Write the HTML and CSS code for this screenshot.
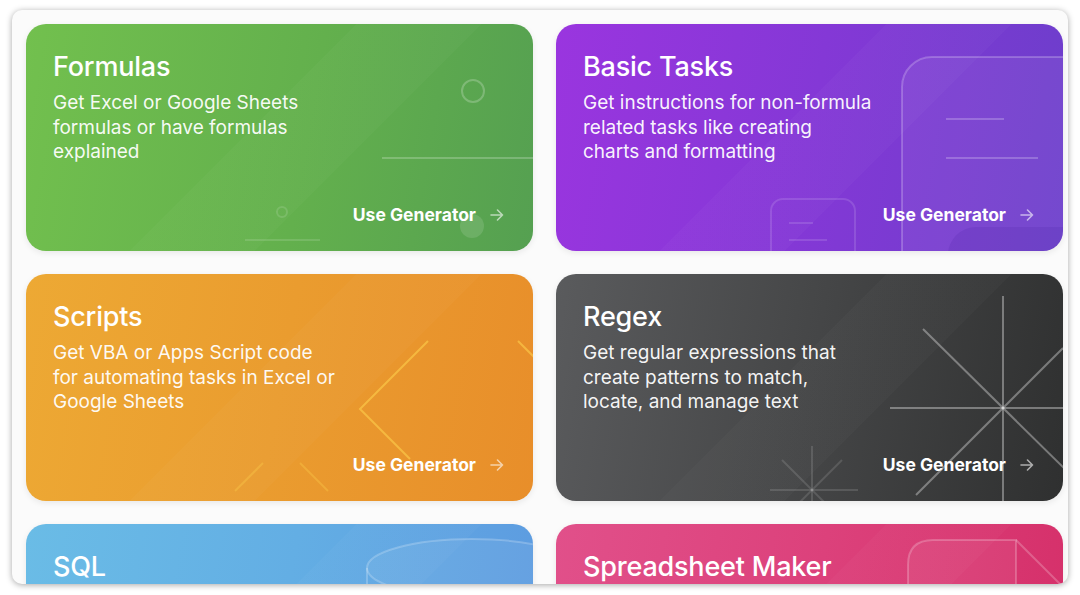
FILE: index.html
```html
<!DOCTYPE html>
<html>
<head>
<meta charset="utf-8">
<link rel="stylesheet" href="styles.css">
</head>
<body>
<div class="frame">
  <div class="grid">
    <div class="card green">
      <svg class="deco" viewBox="0 0 507 227" width="507" height="227">
        <circle cx="447" cy="67" r="11" class="s2"/>
        <line x1="356" y1="134" x2="507" y2="134" class="s2"/>
        <circle cx="256" cy="188" r="5" class="s1"/>
        <circle cx="446" cy="202" r="12" class="f1"/>
        <line x1="219" y1="216" x2="294" y2="216" class="s1"/>
      </svg>
      <h2 class="title">Formulas</h2>
      <p class="desc">Get Excel or Google Sheets<br>formulas or have formulas<br>explained</p>
      <div class="foot"><span class="cta">Use Generator</span><svg class="arrow" viewBox="0 0 14 12" width="14" height="12"><path d="M1 6H12.5M7.5 1L12.5 6L7.5 11"/></svg></div>
    </div>
    <div class="card purple">
      <svg class="deco" viewBox="0 0 507 227" width="507" height="227">
        <rect x="346" y="33" width="300" height="300" rx="30" class="s2 f0"/>
        <line x1="390" y1="95" x2="448" y2="95" class="s2"/>
        <line x1="390" y1="134" x2="482" y2="134" class="s2"/>
        <rect x="215" y="175" width="84" height="100" rx="12" class="s1"/>
        <line x1="233" y1="199" x2="257" y2="199" class="s1"/>
        <line x1="233" y1="216" x2="271" y2="216" class="s1"/>
        <rect x="392" y="203" width="200" height="100" rx="28" class="dk"/>
      </svg>
      <h2 class="title">Basic Tasks</h2>
      <p class="desc">Get instructions for non-formula<br>related tasks like creating<br>charts and formatting</p>
      <div class="foot"><span class="cta">Use Generator</span><svg class="arrow" viewBox="0 0 14 12" width="14" height="12"><path d="M1 6H12.5M7.5 1L12.5 6L7.5 11"/></svg></div>
    </div>
    <div class="card orange">
      <svg class="deco" viewBox="0 0 507 227" width="507" height="227">
        <polyline points="402,67 334,135 384,185" class="sy"/>
        <line x1="492" y1="67" x2="512" y2="87" class="sy"/>
        <line x1="237" y1="189" x2="209" y2="217" class="sy1"/>
        <line x1="274" y1="189" x2="302" y2="217" class="sy1"/>
      </svg>
      <h2 class="title">Scripts</h2>
      <p class="desc">Get VBA or Apps Script code<br>for automating tasks in Excel or<br>Google Sheets</p>
      <div class="foot"><span class="cta">Use Generator</span><svg class="arrow" viewBox="0 0 14 12" width="14" height="12"><path d="M1 6H12.5M7.5 1L12.5 6L7.5 11"/></svg></div>
    </div>
    <div class="card dark">
      <svg class="deco" viewBox="0 0 507 227" width="507" height="227">
        <line x1="447" y1="22" x2="447" y2="227" class="s3"/>
        <line x1="334" y1="134" x2="507" y2="134" class="s3"/>
        <line x1="367" y1="55" x2="520" y2="206" class="s3"/>
        <line x1="507" y1="74" x2="360" y2="221" class="s3"/>
        <line x1="214" y1="216" x2="302" y2="216" class="s1"/>
        <line x1="256" y1="172" x2="256" y2="227" class="s1"/>
        <line x1="226" y1="186" x2="280" y2="240" class="s1"/>
        <line x1="286" y1="186" x2="232" y2="240" class="s1"/>
      </svg>
      <h2 class="title">Regex</h2>
      <p class="desc">Get regular expressions that<br>create patterns to match,<br>locate, and manage text</p>
      <div class="foot"><span class="cta">Use Generator</span><svg class="arrow" viewBox="0 0 14 12" width="14" height="12"><path d="M1 6H12.5M7.5 1L12.5 6L7.5 11"/></svg></div>
    </div>
    <div class="card blue">
      <svg class="deco" viewBox="0 0 507 227" width="507" height="227">
        <ellipse cx="446" cy="44" rx="105" ry="29" class="s2 f0"/>
        <line x1="341" y1="44" x2="341" y2="227" class="s2"/>
      </svg>
      <h2 class="title">SQL</h2>
    </div>
    <div class="card pink">
      <svg class="deco" viewBox="0 0 507 227" width="507" height="227">
        <path d="M352 227V41Q352 16 377 16H460V227" class="s2 f0"/>
        <line x1="460" y1="16" x2="530" y2="86" class="s2"/>
      </svg>
      <h2 class="title">Spreadsheet Maker</h2>
    </div>
  </div>
</div>
</body>
</html>
```
FILE: styles.css
```css
html, body {
  margin: 0;
  padding: 0;
  background: #ffffff;
}
body {
  width: 1080px;
  height: 595px;
  overflow: hidden;
  font-family: Inter, "Open Sans", sans-serif;
}
.frame {
  margin: 10px 0 0 12px;
  width: 1056px;
  height: 574px;
  border-radius: 10px;
  background: #fbfbfb;
  box-shadow: 0 1px 6px rgba(0, 0, 0, 0.35);
  overflow: hidden;
}
.grid {
  display: grid;
  grid-template-columns: 507px 507px;
  grid-auto-rows: 227px;
  column-gap: 23px;
  row-gap: 23px;
  padding: 14px 0 0 14px;
}
.card {
  position: relative;
  overflow: hidden;
  border-radius: 20px;
  box-shadow: 0 2px 6px rgba(0, 0, 0, 0.08);
  padding: 26px 29px 25px 27px;
  display: flex;
  flex-direction: column;
  color: #fff;
  box-sizing: border-box;
}
.card > * { position: relative; }
.deco {
  position: absolute !important;
  left: 0;
  top: 0;
  fill: none;
}
.s1 { stroke: rgba(255,255,255,0.13); stroke-width: 2; }
.s2 { stroke: rgba(255,255,255,0.22); stroke-width: 2; }
.s3 { stroke: rgba(255,255,255,0.35); stroke-width: 2; }
.sy { stroke: rgba(255,214,80,0.55); stroke-width: 2; }
.sy1 { stroke: rgba(255,214,80,0.3); stroke-width: 2; }
.f0 { fill: rgba(255,255,255,0.06); }
.f1 { fill: rgba(255,255,255,0.12); }
.dk { fill: rgba(60,20,150,0.12); }
.title {
  margin: 0;
  font-size: 27px;
  line-height: 34px;
  font-weight: 500;
  letter-spacing: -0.2px;
}
.desc {
  margin: 7px 0 0 0;
  font-size: 19px;
  line-height: 24.5px;
  font-weight: 400;
  color: rgba(255,255,255,0.95);
}
.foot {
  margin-top: auto;
  display: flex;
  justify-content: flex-end;
  align-items: center;
  gap: 14px;
}
.cta {
  font-size: 17.5px;
  font-weight: 700;
  line-height: 22px;
  letter-spacing: 0;
}
.arrow {
  fill: none;
  stroke: rgba(255,255,255,0.6);
  stroke-width: 1.6;
  stroke-linecap: round;
  stroke-linejoin: round;
}
.green {
  background:
    linear-gradient(135deg, transparent 45%, rgba(255,255,255,0.025) 45%, rgba(255,255,255,0.025) 62%, transparent 62%),
    linear-gradient(100deg, #72c04e 0%, #63b04d 55%, #55a051 100%);
}
.purple {
  background:
    linear-gradient(135deg, transparent 45%, rgba(255,255,255,0.025) 45%, rgba(255,255,255,0.025) 62%, transparent 62%),
    linear-gradient(100deg, #9a35df 0%, #8438d6 50%, #6c3ecb 100%);
}
.orange {
  background:
    linear-gradient(135deg, transparent 45%, rgba(255,255,255,0.025) 45%, rgba(255,255,255,0.025) 62%, transparent 62%),
    linear-gradient(100deg, #eda934 0%, #ea9c2f 50%, #e88e2a 100%);
}
.dark {
  background:
    linear-gradient(135deg, transparent 45%, rgba(255,255,255,0.02) 45%, rgba(255,255,255,0.02) 62%, transparent 62%),
    linear-gradient(100deg, #5a5b5d 0%, #454647 50%, #2f3030 100%);
}
.blue {
  background:
    linear-gradient(135deg, transparent 45%, rgba(255,255,255,0.025) 45%, rgba(255,255,255,0.025) 62%, transparent 62%),
    linear-gradient(100deg, #6abce6 0%, #63aee4 50%, #5c9ae0 100%);
}
.pink {
  background:
    linear-gradient(135deg, transparent 45%, rgba(255,255,255,0.025) 45%, rgba(255,255,255,0.025) 62%, transparent 62%),
    linear-gradient(100deg, #e1508a 0%, #dc417b 50%, #d52f69 100%);
}
```
